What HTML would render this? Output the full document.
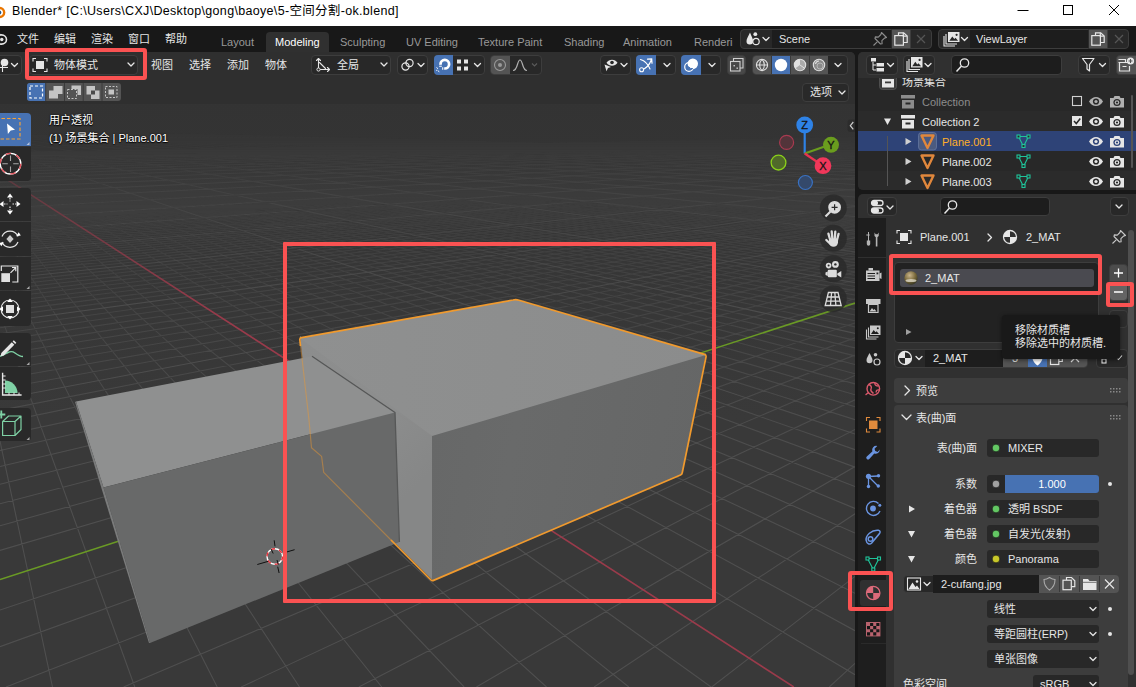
<!DOCTYPE html>
<html lang="zh-CN">
<head>
<meta charset="utf-8">
<title>Blender</title>
<style>
*{box-sizing:border-box;margin:0;padding:0}
html,body{width:1136px;height:687px;overflow:hidden;background:#181818}
body{position:relative;font-family:"Liberation Sans","Noto Sans CJK SC",sans-serif;font-size:11px;color:#e6e6e6;line-height:1}
.abs{position:absolute}
.t{position:absolute;white-space:nowrap;line-height:14px;height:14px}
.w{color:#fff}
.dim{color:#989898}
.fld{position:absolute;background:#282828;border:1px solid #3d3d3d;border-radius:4px}
.dark{background:#1d1d1d}
.btn{position:absolute;background:#545454;border:1px solid #3d3d3d}
.tb{left:-6px;width:37px;background:#292929}
.blue{background:#4772b3 !important}
svg{position:absolute;overflow:visible}
.chev{fill:none;stroke:#e6e6e6;stroke-width:1.3;stroke-linecap:round;stroke-linejoin:round}
</style>
</head>
<body>
<!-- ===== window title bar ===== -->
<div class="abs" style="left:0;top:0;width:1136px;height:26px;background:#fff"></div>
<svg style="left:-9px;top:5px" width="16" height="14" viewBox="0 0 16 14"><ellipse cx="8" cy="7.5" rx="5.2" ry="4.6" fill="#fff" stroke="#ea7600" stroke-width="2.4"/><circle cx="8.3" cy="7.5" r="2" fill="#265787"/></svg>
<div class="t" style="left:12px;top:3px;font-size:12.500px;color:#000;line-height:16px;height:16px;letter-spacing:0.320px">Blender* [C:\Users\CXJ\Desktop\gong\baoye\5-空间分割-ok.blend]</div>
<svg style="left:1017px;top:4px" width="110" height="14" viewBox="0 0 110 14"><g fill="none" stroke="#000" stroke-width="1"><path d="M0.5 6.5H11.5"/><rect x="46.5" y="1.5" width="9" height="9"/><path d="M92 1L102 11M102 1L92 11"/></g></svg>
<!-- ===== top bar ===== -->
<div class="abs" style="left:0;top:26px;width:1136px;height:26px;background:#181818"></div>
<svg style="left:-8px;top:31px" width="18" height="16" viewBox="0 0 18 16"><g fill="none" stroke="#e6e6e6" stroke-width="1.6" stroke-linecap="round"><ellipse cx="9.5" cy="8.5" rx="5" ry="4.6"/><path d="M3 8.5L8 3.5"/></g><circle cx="9.8" cy="8.5" r="1.7" fill="#e6e6e6"/></svg>
<div class="t" style="left:17px;top:32px">文件</div>
<div class="t" style="left:54px;top:32px">编辑</div>
<div class="t" style="left:91px;top:32px">渲染</div>
<div class="t" style="left:128px;top:32px">窗口</div>
<div class="t" style="left:165px;top:32px">帮助</div>
<div class="abs" style="left:266px;top:32px;width:63px;height:20px;background:#303030;border-radius:4px 4px 0 0"></div>
<div class="t dim" style="left:221px;top:35px">Layout</div>
<div class="t w" style="left:275px;top:35px">Modeling</div>
<div class="t dim" style="left:340px;top:35px">Sculpting</div>
<div class="t dim" style="left:406px;top:35px">UV Editing</div>
<div class="t dim" style="left:478px;top:35px">Texture Paint</div>
<div class="t dim" style="left:564px;top:35px">Shading</div>
<div class="t dim" style="left:623px;top:35px">Animation</div>
<div class="t dim" style="left:694px;top:35px;width:39px;overflow:hidden">Rendering</div>
<!-- scene selector -->
<div class="fld" style="left:740px;top:29px;width:192px;height:20px"></div>
<div class="abs dark" style="left:772px;top:30px;width:119px;height:18px"></div>
<div class="btn" style="left:891px;top:29px;width:20px;height:20px;border-left:1px solid #2b2b2b"></div>
<svg style="left:745px;top:31px" width="26" height="16" viewBox="0 0 26 16"><g fill="#e6e6e6"><path d="M5 1.5C3.5 5 1.5 7.5 1.5 10.2a3.3 3.3 0 0 0 6.6 0C8.1 7.5 6.3 5 5 1.5z"/><circle cx="10.3" cy="3.2" r="1.9"/></g><circle cx="11" cy="10.5" r="3.2" fill="#282828" stroke="#e6e6e6" stroke-width="1.2"/><path class="chev" d="M18 6.5l3 3l3-3"/></svg>
<div class="t" style="left:779px;top:32px">Scene</div>
<svg style="left:872px;top:31px" width="16" height="16" viewBox="0 0 16 16"><path d="M9.5 1.5l5 5l-2 .6l-2.6 2.6l.2 3l-1.6.3l-5.5-5.5l.3-1.6l3 .2l2.6-2.6zM5.2 10.8L1.5 14.5" fill="none" stroke="#8c8c8c" stroke-width="1.1" stroke-linejoin="round"/></svg>
<svg style="left:894px;top:32px" width="14" height="14" viewBox="0 0 14 14"><g fill="none" stroke="#e6e6e6" stroke-width="1.2"><path d="M4.5 3.5V0.8h5.2l3.5 3.3v6.4H9.5"/><path d="M9.3 0.8v3.4h3.6"/><rect x="0.8" y="3.6" width="8.6" height="9.6"/></g></svg>
<svg style="left:916px;top:34px" width="10" height="10" viewBox="0 0 10 10"><path d="M1 1l8 8M9 1l-8 8" stroke="#555" stroke-width="1.2" fill="none"/></svg>
<!-- view layer selector -->
<div class="fld" style="left:938px;top:29px;width:191px;height:20px"></div>
<div class="abs dark" style="left:970px;top:30px;width:118px;height:18px"></div>
<div class="btn" style="left:1088px;top:29px;width:20px;height:20px;border-left:1px solid #2b2b2b"></div>
<svg style="left:943px;top:31px" width="26" height="16" viewBox="0 0 26 16"><g fill="none" stroke="#e6e6e6" stroke-width="1.1"><path d="M1 5v10h11"/><path d="M3 3v10h11"/></g><rect x="5" y="1" width="11.5" height="10" fill="#e6e6e6"/><path d="M6.3 9.8l3-4.4l2 2.6l1.2-1.2l2.6 3z" fill="#282828"/><circle cx="13.6" cy="3.8" r="1.1" fill="#282828"/><path class="chev" d="M18.5 6.5l3 3l3-3"/></svg>
<div class="t" style="left:976px;top:32px">ViewLayer</div>
<svg style="left:1091px;top:32px" width="14" height="14" viewBox="0 0 14 14"><g fill="none" stroke="#e6e6e6" stroke-width="1.2"><path d="M4.5 3.5V0.8h5.2l3.5 3.3v6.4H9.5"/><path d="M9.3 0.8v3.4h3.6"/><rect x="0.8" y="3.6" width="8.6" height="9.6"/></g></svg>
<svg style="left:1114px;top:34px" width="10" height="10" viewBox="0 0 10 10"><path d="M1 1l8 8M9 1l-8 8" stroke="#555" stroke-width="1.2" fill="none"/></svg>
<!-- ===== 3d viewport scene ===== -->
<svg style="left:0;top:0" width="1136" height="687" viewBox="0 0 1136 687">
<defs>
<linearGradient id="fade" x1="0" y1="128" x2="0" y2="320" gradientUnits="userSpaceOnUse"><stop offset="0" stop-color="#fff" stop-opacity="0"/><stop offset="0.3" stop-color="#fff" stop-opacity="0.42"/><stop offset="1" stop-color="#fff" stop-opacity="1"/></linearGradient>
<linearGradient id="fade2" x1="0" y1="140" x2="0" y2="470" gradientUnits="userSpaceOnUse"><stop offset="0" stop-color="#fff" stop-opacity="0"/><stop offset="0.2" stop-color="#fff" stop-opacity="0.3"/><stop offset="0.5" stop-color="#fff" stop-opacity="0.55"/><stop offset="1" stop-color="#fff" stop-opacity="1"/></linearGradient>
<mask id="gm" maskUnits="userSpaceOnUse" x="0" y="52" width="855" height="635"><rect x="0" y="52" width="855" height="635" fill="url(#fade)"/></mask>
<mask id="gm2" maskUnits="userSpaceOnUse" x="0" y="52" width="855" height="635"><rect x="0" y="52" width="855" height="635" fill="url(#fade2)"/></mask>
<clipPath id="vp"><rect x="-20" y="52" width="875" height="660" rx="5"/></clipPath>
<linearGradient id="gx" x1="432" y1="433" x2="700" y2="480" gradientUnits="userSpaceOnUse"><stop offset="0" stop-color="#676868"/><stop offset="0.3" stop-color="#696a6a"/><stop offset="1" stop-color="#656666"/></linearGradient>
<linearGradient id="gt" x1="300" y1="338" x2="706" y2="355" gradientUnits="userSpaceOnUse"><stop offset="0" stop-color="#8f9090"/><stop offset="1" stop-color="#8b8c8c"/></linearGradient>
<linearGradient id="gy" x1="300" y1="338" x2="432" y2="470" gradientUnits="userSpaceOnUse"><stop offset="0" stop-color="#8c8d8d"/><stop offset="0.55" stop-color="#8d8e8e"/><stop offset="1" stop-color="#868787"/></linearGradient>
<linearGradient id="bgg" x1="0" y1="100" x2="0" y2="420" gradientUnits="userSpaceOnUse"><stop offset="0" stop-color="#333333"/><stop offset="1" stop-color="#393939"/></linearGradient>
</defs>
<g clip-path="url(#vp)">
<rect x="0" y="52" width="855" height="635" fill="url(#bgg)"/>
<g mask="url(#gm2)" fill="none">
<path stroke="#4f4f4f" stroke-width="1.1" d="M0.0 152.7L855.0 137.8M0.0 152.8L855.0 137.9M0.0 152.9L855.0 137.9M0.0 152.9L855.0 138.0M0.0 153.0L855.0 138.0M0.0 153.1L855.0 138.0M0.0 153.2L855.0 138.1M0.0 153.3L855.0 138.1M0.0 153.4L855.0 138.1M0.0 153.6L855.0 138.2M0.0 153.7L855.0 138.3M0.0 153.8L855.0 138.3M0.0 153.9L855.0 138.3M0.0 154.0L855.0 138.4M0.0 154.1L855.0 138.4M0.0 154.2L855.0 138.5M0.0 154.3L855.0 138.5M0.0 154.4L855.0 138.6M0.0 154.6L855.0 138.6M0.0 154.7L855.0 138.7M0.0 154.8L855.0 138.7M0.0 155.0L855.0 138.8M0.0 155.1L855.0 138.8M0.0 155.2L855.0 138.9M0.0 155.3L855.0 138.9M0.0 155.4L855.0 138.9M0.0 155.5L855.0 139.0M0.0 155.7L855.0 139.1M0.0 155.8L855.0 139.1M0.0 156.0L855.0 139.2M0.0 156.1L855.0 139.2M0.0 156.2L855.0 139.3M0.0 156.3L855.0 139.3M0.0 156.4L855.0 139.4M0.0 156.6L855.0 139.4M0.0 156.7L855.0 139.5M0.0 156.9L855.0 139.6M0.0 157.1L855.0 139.6M0.0 157.2L855.0 139.7M0.0 157.3L855.0 139.7M0.0 157.4L855.0 139.8M0.0 157.6L855.0 139.8M0.0 157.7L855.0 139.9M0.0 157.8L855.0 139.9M0.0 158.0L855.0 140.0M0.0 158.2L855.0 140.1M0.0 158.4L855.0 140.1M0.0 158.5L855.0 140.2M0.0 158.6L855.0 140.3M0.0 158.8L855.0 140.3M0.0 158.9L855.0 140.4M0.0 159.1L855.0 140.4M0.0 159.2L855.0 140.5M0.0 159.4L855.0 140.5M0.0 159.6L855.0 140.7M0.0 159.8L855.0 140.7M0.0 160.0L855.0 140.8M0.0 160.1L855.0 140.9M0.0 160.3L855.0 140.9M0.0 160.4L855.0 141.0M0.0 160.6L855.0 141.0M0.0 160.7L855.0 141.1M0.0 160.9L855.0 141.2M0.0 161.2L855.0 141.3M0.0 161.4L855.0 141.4M0.0 161.5L855.0 141.4M0.0 161.7L855.0 141.5M0.0 161.9L855.0 141.6M0.0 162.1L855.0 141.6M0.0 162.2L855.0 141.7M0.0 162.4L855.0 141.8M0.0 162.6L855.0 141.9M0.0 162.9L855.0 142.0M0.0 163.1L855.0 142.1M0.0 163.3L855.0 142.1M0.0 163.5L855.0 142.2M0.0 163.7L855.0 142.3M0.0 163.9L855.0 142.4M0.0 164.1L855.0 142.5M0.0 164.3L855.0 142.5M0.0 164.4L855.0 142.6M0.0 164.8L855.0 142.8M0.0 165.0L855.0 142.9M0.0 165.3L855.0 142.9M0.0 165.5L855.0 143.0M0.0 165.7L855.0 143.1M0.0 165.9L855.0 143.2M0.0 166.1L855.0 143.3M0.0 166.3L855.0 143.4M0.0 166.5L855.0 143.5M0.0 167.0L855.0 143.6M0.0 167.2L855.0 143.7M0.0 167.4L855.0 143.8M0.0 167.7L855.0 143.9M0.0 167.9L855.0 144.0M0.0 168.1L855.0 144.1M0.0 168.4L855.0 144.2M0.0 168.6L855.0 144.3M0.0 168.9L855.0 144.4M0.0 169.4L855.0 144.6M0.0 169.6L855.0 144.7M0.0 169.9L855.0 144.8M0.0 170.1L855.0 144.9M0.0 170.4L855.0 145.0M0.0 170.7L855.0 145.1M0.0 170.9L855.0 145.2M0.0 171.2L855.0 145.4M0.0 171.5L855.0 145.5M0.0 172.1L855.0 145.7M0.0 172.4L855.0 145.8M0.0 172.6L855.0 145.9M0.0 172.9L855.0 146.0M0.0 173.2L855.0 146.2M0.0 173.5L855.0 146.3M0.0 173.9L855.0 146.4M0.0 174.2L855.0 146.5M0.0 174.5L855.0 146.7M0.0 175.1L855.0 146.9M0.0 175.5L855.0 147.1M0.0 175.8L855.0 147.2M0.0 176.1L855.0 147.3M0.0 176.5L855.0 147.5M0.0 176.8L855.0 147.6M0.0 177.2L855.0 147.8M0.0 177.6L855.0 147.9M0.0 177.9L855.0 148.1M0.0 178.7L855.0 148.4M0.0 179.0L855.0 148.5M0.0 179.4L855.0 148.7M0.0 179.8L855.0 148.8M0.0 180.2L855.0 149.0M0.0 180.6L855.0 149.2M0.0 181.1L855.0 149.3M0.0 181.5L855.0 149.5M0.0 181.9L855.0 149.7M0.0 182.8L855.0 150.0M0.0 183.2L855.0 150.2M0.0 183.7L855.0 150.4M0.0 184.1L855.0 150.6M0.0 184.6L855.0 150.8M0.0 185.1L855.0 151.0M0.0 185.6L855.0 151.2M0.0 186.1L855.0 151.4M0.0 186.6L855.0 151.6M0.0 187.6L855.0 152.0M0.0 188.1L855.0 152.2M0.0 188.7L855.0 152.4M0.0 189.2L855.0 152.6M0.0 189.8L855.0 152.9M0.0 190.3L855.0 153.1M0.0 190.9L855.0 153.3M0.0 191.5L855.0 153.6M0.0 192.1L855.0 153.8M0.0 193.3L855.0 154.3M0.0 194.0L855.0 154.6M0.0 194.6L855.0 154.8M0.0 195.3L855.0 155.1M0.0 195.9L855.0 155.4M0.0 196.6L855.0 155.6M0.0 197.3L855.0 155.9M0.0 198.1L855.0 156.2M0.0 198.8L855.0 156.5M0.0 200.3L855.0 157.1M0.0 201.1L855.0 157.4M0.0 201.9L855.0 157.8M0.0 202.7L855.0 158.1M0.0 203.5L855.0 158.4M0.0 204.4L855.0 158.8M0.0 205.2L855.0 159.1M0.0 206.1L855.0 159.5M0.0 207.0L855.0 159.8M0.0 208.9L855.0 160.6M0.0 209.9L855.0 161.0M0.0 210.9L855.0 161.4M0.0 211.9L855.0 161.8M0.0 213.0L855.0 162.3M0.0 214.0L855.0 162.7M0.0 215.1L855.0 163.1M0.0 216.3L855.0 163.6M0.0 217.4L855.0 164.1M0.0 219.9L855.0 165.0M0.0 221.1L855.0 165.6M0.0 222.4L855.0 166.1M0.0 223.7L855.0 166.6M0.0 225.1L855.0 167.2M0.0 226.5L855.0 167.7M0.0 228.0L855.0 168.3M0.0 229.5L855.0 168.9M0.0 231.0L855.0 169.5M0.0 234.2L855.0 170.9M0.0 235.9L855.0 171.5M0.0 237.6L855.0 172.2M0.0 239.4L855.0 173.0M0.0 241.3L855.0 173.7M0.0 243.2L855.0 174.5M0.0 245.2L855.0 175.3M0.0 247.2L855.0 176.1M0.0 249.4L855.0 177.0M0.0 253.9L855.0 178.8M0.0 256.2L855.0 179.8M0.0 258.7L855.0 180.8M0.0 261.3L855.0 181.8M0.0 263.9L855.0 182.9M0.0 266.7L855.0 184.0M0.0 269.6L855.0 185.2M0.0 272.6L855.0 186.4M0.0 275.7L855.0 187.7M0.0 282.4L855.0 190.4M0.0 286.0L855.0 191.8M0.0 289.8L855.0 193.3M0.0 293.7L855.0 194.9M0.0 297.8L855.0 196.6M0.0 302.2L855.0 198.4M0.0 306.7L855.0 200.2M0.0 311.6L855.0 202.2M0.0 316.6L855.0 204.2M0.0 327.7L855.0 208.7M0.0 333.7L855.0 211.1M0.0 340.1L855.0 213.7M0.0 346.9L855.0 216.5M0.0 354.2L855.0 219.4M0.0 362.0L855.0 222.6M0.0 370.3L855.0 225.9M0.0 379.2L855.0 229.6M0.0 388.8L855.0 233.4M0.0 410.4L855.0 242.2M0.0 441.1L52.5 687.0M0.0 422.6L855.0 247.1M0.0 313.2L134.8 687.0M0.0 435.9L855.0 252.5M0.0 259.5L217.2 687.0M0.0 450.5L855.0 258.4M0.0 229.9L299.5 687.0M0.0 466.5L855.0 264.9M0.0 211.1L381.8 687.0M0.0 484.2L855.0 272.1M0.0 198.2L464.1 687.0M0.0 503.8L855.0 280.0M0.0 188.8L546.5 687.0M0.0 525.7L855.0 288.9M0.0 181.5L628.8 687.0M0.0 550.4L855.0 298.8M0.0 175.8L711.1 687.0M0.0 610.0L855.0 323.0M0.0 167.4L855.0 674.7M0.0 646.7L855.0 337.8M0.0 164.3L855.0 630.7M6.0 687.0L855.0 355.1M0.0 161.5L855.0 593.3M123.6 687.0L855.0 375.5M0.0 159.2L855.0 561.1M241.2 687.0L855.0 399.8M0.0 157.2L855.0 533.1M358.8 687.0L855.0 429.5M0.0 155.4L855.0 508.4M476.4 687.0L855.0 466.5M0.0 153.8L855.0 486.6M594.1 687.0L855.0 513.8M0.0 152.4L855.0 467.2M711.7 687.0L855.0 576.4M0.0 151.1L855.0 449.7M0.0 148.9L855.0 419.7M0.0 148.0L855.0 406.7M0.0 147.1L855.0 394.8M0.0 146.3L855.0 383.9M0.0 145.6L855.0 373.8M0.0 144.9L855.0 364.5M0.0 144.3L855.0 355.9M0.0 143.7L855.0 347.9M0.0 143.2L855.0 340.4M-0.0 142.2L855.0 326.9M0.0 141.8L855.0 320.7M0.0 141.3L855.0 315.0M0.0 140.9L855.0 309.5M0.0 140.6L855.0 304.4M0.0 140.2L855.0 299.6M0.0 139.9L855.0 295.0M0.0 139.6L855.0 290.6M0.0 139.3L855.0 286.5M0.0 138.7L855.0 278.8M0.0 138.5L855.0 275.3M0.0 138.2L855.0 271.9M0.0 138.0L855.0 268.6M0.0 137.8L855.0 265.5M0.0 137.5L855.0 262.6M0.0 137.3L855.0 259.7M0.0 137.1L855.0 257.0M0.0 136.9L855.0 254.4M0.0 136.6L855.0 249.5M0.0 136.4L855.0 247.1M0.0 136.3L855.0 244.9M0.0 136.1L855.0 242.8M0.0 136.0L855.0 240.7M0.0 135.8L855.0 238.7M0.0 135.7L855.0 236.8M0.0 135.5L855.0 234.9M0.0 135.4L855.0 233.1M0.6 135.2L855.0 229.7M1.6 135.2L855.0 228.0M2.7 135.2L855.0 226.5M3.7 135.2L855.0 224.9M4.8 135.2L855.0 223.4M5.8 135.2L855.0 222.0M6.9 135.2L855.0 220.6M7.9 135.2L855.0 219.2M8.9 135.2L855.0 217.9M11.0 135.2L855.0 215.4M12.0 135.2L855.0 214.2M13.1 135.2L855.0 213.0M14.1 135.1L855.0 211.9M15.1 135.1L855.0 210.8M16.1 135.1L855.0 209.7M17.2 135.1L855.0 208.6M18.2 135.1L855.0 207.6M19.2 135.1L855.0 206.6M21.3 135.1L855.0 204.6M22.3 135.1L855.0 203.7M23.3 135.1L855.0 202.8M24.3 135.1L855.0 201.9M25.3 135.1L855.0 201.0M26.3 135.1L855.0 200.2M27.4 135.1L855.0 199.4M28.4 135.1L855.0 198.6M29.4 135.1L855.0 197.8M31.4 135.1L855.0 196.2M32.4 135.1L855.0 195.5M33.4 135.0L855.0 194.8M34.4 135.0L855.0 194.1M35.4 135.0L855.0 193.4M36.4 135.0L855.0 192.7M37.4 135.0L855.0 192.0M38.4 135.0L855.0 191.4M39.4 135.0L855.0 190.7M41.4 135.0L855.0 189.5M42.3 135.0L855.0 188.9M43.3 135.0L855.0 188.3M44.3 135.0L855.0 187.7M45.3 135.0L855.0 187.1M46.3 135.0L855.0 186.6M47.3 135.0L855.0 186.0M48.3 135.0L855.0 185.5M49.2 135.0L855.0 185.0M51.2 135.0L855.0 183.9M52.2 134.9L855.0 183.4M53.1 134.9L855.0 183.0M54.1 134.9L855.0 182.5M55.1 134.9L855.0 182.0M56.1 134.9L855.0 181.5M57.0 134.9L855.0 181.1M58.0 134.9L855.0 180.6M59.0 134.9L855.0 180.2M60.9 134.9L855.0 179.3M61.8 134.9L855.0 178.9M62.8 134.9L855.0 178.5M63.8 134.9L855.0 178.1M64.7 134.9L855.0 177.7M65.7 134.9L855.0 177.3M66.6 134.9L855.0 176.9M67.6 134.9L855.0 176.5M68.5 134.9L855.0 176.1M70.4 134.9L855.0 175.4M71.4 134.8L855.0 175.0M72.3 134.8L855.0 174.7M73.3 134.8L855.0 174.3M74.2 134.8L855.0 174.0M75.2 134.8L855.0 173.6M76.1 134.8L855.0 173.3M77.1 134.8L855.0 173.0M78.0 134.8L855.0 172.7M79.9 134.8L855.0 172.0M80.8 134.8L855.0 171.7M81.7 134.8L855.0 171.4M82.7 134.8L855.0 171.1M83.6 134.8L855.0 170.8M84.5 134.8L855.0 170.5M85.5 134.8L855.0 170.2M86.4 134.8L855.0 169.9M87.3 134.8L855.0 169.7M89.2 134.8L855.0 169.1M90.1 134.8L855.0 168.8M91.0 134.7L855.0 168.6M91.9 134.7L855.0 168.3M92.9 134.7L855.0 168.0M93.8 134.7L855.0 167.8M94.7 134.7L855.0 167.5M95.6 134.7L855.0 167.3M96.5 134.7L855.0 167.0M98.3 134.7L855.0 166.5M99.3 134.7L855.0 166.3M100.2 134.7L855.0 166.1M101.1 134.7L855.0 165.8M102.0 134.7L855.0 165.6M102.9 134.7L855.0 165.4M103.8 134.7L855.0 165.2M104.7 134.7L855.0 164.9M105.6 134.7L855.0 164.7M107.4 134.7L855.0 164.3M108.3 134.7L855.0 164.1M109.2 134.7L855.0 163.9M110.1 134.6L855.0 163.7M111.0 134.6L855.0 163.4M111.9 134.6L855.0 163.2M112.8 134.6L855.0 163.0M113.7 134.6L855.0 162.8M114.5 134.6L855.0 162.7M116.3 134.6L855.0 162.3M117.2 134.6L855.0 162.1M118.1 134.6L855.0 161.9M119.0 134.6L855.0 161.7M119.9 134.6L855.0 161.5M120.7 134.6L855.0 161.3M121.6 134.6L855.0 161.2M122.5 134.6L855.0 161.0M123.4 134.6L855.0 160.8M125.1 134.6L855.0 160.5M126.0 134.6L855.0 160.3M126.9 134.6L855.0 160.1M127.7 134.6L855.0 160.0M128.6 134.6L855.0 159.8M129.5 134.5L855.0 159.6M130.4 134.5L855.0 159.5M131.2 134.5L855.0 159.3M132.1 134.5L855.0 159.2M133.8 134.5L855.0 158.8M134.7 134.5L855.0 158.7M135.5 134.5L855.0 158.5M136.4 134.5L855.0 158.4M137.3 134.5L855.0 158.2M138.1 134.5L855.0 158.1M139.0 134.5L855.0 157.9M139.8 134.5L855.0 157.8M140.7 134.5L855.0 157.7M142.4 134.5L855.0 157.4M143.3 134.5L855.0 157.2M144.1 134.5L855.0 157.1M145.0 134.5L855.0 157.0M145.8 134.5L855.0 156.8M146.6 134.5L855.0 156.7M147.5 134.5L855.0 156.6M148.3 134.4L855.0 156.4M149.2 134.4L855.0 156.3M150.9 134.4L855.0 156.0M151.7 134.4L855.0 155.9M152.5 134.4L855.0 155.8M153.4 134.4L855.0 155.7M154.2 134.4L855.0 155.5M155.1 134.4L855.0 155.4M155.9 134.4L855.0 155.3M156.7 134.4L855.0 155.2M157.6 134.4L855.0 155.0M159.2 134.4L855.0 154.8M160.0 134.4L855.0 154.7M160.9 134.4L855.0 154.6M161.7 134.4L855.0 154.5M162.5 134.4L855.0 154.4M163.4 134.4L855.0 154.2M164.2 134.4L855.0 154.1M165.0 134.4L855.0 154.0M165.8 134.4L855.0 153.9M167.5 134.3L855.0 153.7M168.3 134.3L855.0 153.6M169.1 134.3L855.0 153.5M169.9 134.3L855.0 153.4M170.7 134.3L855.0 153.3M171.5 134.3L855.0 153.2M172.4 134.3L855.0 153.1M173.2 134.3L855.0 153.0M174.0 134.3L855.0 152.9M175.6 134.3L855.0 152.7M176.4 134.3L855.0 152.6M177.2 134.3L855.0 152.5M178.0 134.3L855.0 152.4M178.8 134.3L855.0 152.3M179.6 134.3L855.0 152.2M180.4 134.3L855.0 152.1M181.2 134.3L855.0 152.0M182.0 134.3L855.0 151.9M183.6 134.3L855.0 151.7M184.4 134.3L855.0 151.6M185.2 134.3L855.0 151.5M186.0 134.3L855.0 151.4M186.8 134.2L855.0 151.3M187.6 134.2L855.0 151.3M188.4 134.2L855.0 151.2M189.2 134.2L855.0 151.1M190.0 134.2L855.0 151.0"/>
</g>
<g mask="url(#gm)" fill="none">
<path stroke="#4e4e4e" stroke-width="1.1" d="M0.0 152.6L855.0 137.8M0.0 153.5L855.0 138.2M0.0 154.5L855.0 138.6M0.0 155.6L855.0 139.0M0.0 156.8L855.0 139.5M0.0 158.1L855.0 140.0M0.0 159.5L855.0 140.6M0.0 161.0L855.0 141.2M0.0 162.8L855.0 141.9M0.0 164.6L855.0 142.7M0.0 166.8L855.0 143.5M0.0 169.1L855.0 144.5M0.0 171.8L855.0 145.6M0.0 174.8L855.0 146.8M0.0 178.3L855.0 148.2M0.0 182.3L855.0 149.8M0.0 187.1L855.0 151.8M0.0 192.7L855.0 154.1M0.0 199.5L855.0 156.8M0.0 208.0L855.0 160.2M0.0 218.6L855.0 164.5M0.0 232.6L855.0 170.2M0.0 251.6L855.0 177.9M0.0 279.0L855.0 189.0M0.0 322.0L855.0 206.4M0.0 399.2L855.0 237.6M829.3 687.0L855.0 663.3M0.0 150.0L855.0 434.0M0.0 142.7L855.0 333.4M0.0 139.0L855.0 282.6M0.0 136.8L855.0 251.9M0.0 135.3L855.0 231.3M10.0 135.2L855.0 216.6M20.2 135.1L855.0 205.6M30.4 135.1L855.0 197.0M40.4 135.0L855.0 190.1M50.2 135.0L855.0 184.5M59.9 134.9L855.0 179.7M69.5 134.9L855.0 175.8M78.9 134.8L855.0 172.3M88.2 134.8L855.0 169.4M97.4 134.7L855.0 166.8M106.5 134.7L855.0 164.5M115.4 134.6L855.0 162.5M124.3 134.6L855.0 160.6M133.0 134.5L855.0 159.0M141.5 134.5L855.0 157.5M150.0 134.4L855.0 156.2M158.4 134.4L855.0 154.9M166.6 134.4L855.0 153.8M174.8 134.3L855.0 152.8M182.8 134.3L855.0 151.8M190.8 134.2L855.0 150.9"/>
<path stroke="#9a3b4b" stroke-width="1.6" d="M0 174.900L793.800 687"/>
<path stroke="#6a9a25" stroke-width="1.6" d="M0 579.500L855 303.100"/>
</g>
<!-- boxes -->
<g stroke-linejoin="round">
<!-- B1 (selected) -->
<polygon points="300,336 433,434 433.500,581 314,463" fill="url(#gy)"/>
<polygon points="432,434 706,353 682,474.400 432,581" fill="url(#gx)"/>
<polygon points="300,338 516,299.500 706,355 432,436" fill="url(#gt)"/>
<path d="M397,413.500L432,436" stroke="#8a8b8b" stroke-width="1" fill="none" opacity=".6"/>
<!-- B2 -->
<polygon points="76,401.5 312,356.3 395,412.5 103.5,487.5" fill="#8f9090"/>
<polygon points="103.5,487.5 395,412.5 399.4,542 150,643" fill="#686969"/>
<polygon points="76,401.5 103.5,487.5 150,643 149,643 75,402" fill="#7a7b7b"/>
<path d="M312,356.300L395,412.500L399.400,542" fill="none" stroke="#565757" stroke-width="1.300"/>
<!-- outline of active object -->
<path d="M392,541L323.7,472.4L321.6,456.4L311.5,447.7L309,420L300.5,345" fill="none" stroke="#f09a2e" stroke-width="1.2" stroke-opacity="0.45"/>
<path d="M300.5,346L299.8,339.5Q299.8,338 301.5,337.7L513,300Q516,299.3 519,300.2L704.5,354.4Q706.4,355 706,357L682.3,472.5Q682,474.4 680.5,475L433,580.6Q432,581 431,580L391,540" fill="none" stroke="#f09a2e" stroke-width="1.700"/>
</g>
<!-- 3d cursor -->
<g fill="none">
<circle cx="274.800" cy="556.500" r="7.800" stroke="#fff" stroke-width="1.400"/>
<circle cx="274.800" cy="556.500" r="7.800" stroke="#e8323c" stroke-width="1.400" stroke-dasharray="4.080 4.080"/>
<path d="M274.200,540.300l.8,6M277.700,566.700l1.400,6.300M257.300,564.500l11,-3.200M283.200,553l11.400,-3.300M271,549l2.200,4.500M277,560l1.300,4.500" stroke="#111" stroke-width="1"/>
</g>
</g>
</svg>
<!-- ===== viewport header (two rows, translucent) ===== -->
<div class="abs" style="left:0;top:52px;width:855px;height:52px;background:rgba(46,46,46,.8);border-radius:0 5px 0 0"></div>
<!-- editor type -->
<div class="fld" style="left:-6px;top:55px;width:28px;height:20px"></div>
<svg style="left:-2px;top:57px" width="24" height="16" viewBox="0 0 24 16"><circle cx="6.5" cy="5.5" r="3.8" fill="#e6e6e6"/><path d="M0 10.5H10M4.5 6V15" stroke="#e6e6e6" stroke-width="1.1" fill="none"/><path class="chev" d="M13.5 6.5l3 3l3-3"/></svg>
<!-- mode -->
<div class="fld" style="left:29px;top:55px;width:109px;height:20px"></div>
<svg style="left:32px;top:57px" width="16" height="16" viewBox="0 0 16 16"><rect x="4" y="4" width="8" height="8" fill="#e6e6e6"/><path d="M1 4.5V1.5H4M12 1.5h3V4.5M15 11.5v3H12M4 14.500H1V11.500" fill="none" stroke="#e6e6e6" stroke-width="1.1"/></svg>
<div class="t" style="left:54px;top:58px">物体模式</div>
<svg style="left:127px;top:62px" width="8" height="6" viewBox="0 0 8 6"><path class="chev" d="M1 1l3 3l3-3"/></svg>
<div class="t" style="left:151px;top:58px">视图</div>
<div class="t" style="left:189px;top:58px">选择</div>
<div class="t" style="left:227px;top:58px">添加</div>
<div class="t" style="left:265px;top:58px">物体</div>
<!-- orientation -->
<div class="fld" style="left:311px;top:55px;width:80px;height:20px"></div>
<svg style="left:315px;top:57px" width="16" height="16" viewBox="0 0 16 16"><g fill="none" stroke="#e6e6e6" stroke-width="1.1" stroke-linecap="round" stroke-linejoin="round"><path d="M3.5 12.5V1.5M1.5 3.5l2-2l2 2M3.500 12.500H14.500M12.500 10.500l2 2l-2 2"/><path d="M4.5 5.500L10.500 11.500"/></g><circle cx="3.5" cy="12.5" r="1.6" fill="#282828" stroke="#e6e6e6"/></svg>
<div class="t" style="left:337px;top:58px">全局</div>
<svg style="left:380px;top:62px" width="8" height="6" viewBox="0 0 8 6"><path class="chev" d="M1 1l3 3l3-3"/></svg>
<!-- pivot/link -->
<div class="fld" style="left:397px;top:55px;width:31px;height:20px"></div>
<svg style="left:400px;top:57px" width="28" height="16" viewBox="0 0 28 16"><g fill="none" stroke="#e6e6e6" stroke-width="1.2"><circle cx="5.500" cy="9.500" r="3.600"/><circle cx="9.500" cy="6" r="3.600"/><path class="chev" d="M18 6.500l3 3l3-3"/></g></svg>
<!-- snap -->
<div class="fld" style="left:434px;top:55px;width:51px;height:20px"></div>
<div class="abs blue" style="left:434px;top:55px;width:19px;height:20px;border-radius:4px 0 0 4px"></div>
<svg style="left:435px;top:57px" width="50" height="16" viewBox="0 0 50 16"><path d="M5.500 9.800V7.200a4.300 4.300 0 1 1 4.300 4.300H7.200" fill="none" stroke="#fff" stroke-width="2.700"/><path d="M3.800 8.300h3.400M8.700 9.800v3.400" stroke="#4772b3" stroke-width=".9" fill="none"/><path d="M1.500 10.500l1.500 1.200M3 13.800l1.300 1M1.200 13.300h1.200" stroke="#fff" stroke-width="1" fill="none"/><g fill="#e6e6e6"><rect x="22" y="2.500" width="4" height="4"/><rect x="29" y="2.500" width="4" height="4"/><rect x="22" y="9.500" width="4" height="4"/><rect x="29" y="9.500" width="4" height="4"/></g><path class="chev" d="M39.500 6.500l3 3l3-3"/></svg>
<!-- proportional -->
<div class="fld" style="left:490px;top:55px;width:52px;height:20px"></div>
<div class="abs" style="left:491px;top:56px;width:19px;height:18px;border-radius:3px 0 0 3px;background:#545454"></div>
<svg style="left:492px;top:57px" width="50" height="16" viewBox="0 0 50 16"><circle cx="8" cy="8" r="5.500" fill="none" stroke="#9a9a9a" stroke-width="1.100"/><circle cx="8" cy="8" r="2" fill="#9a9a9a"/><path d="M21 13.500c5 0 4-10.500 7-10.500s2 10.500 7 10.500" fill="none" stroke="#b0b0b0" stroke-width="1.200"/><path d="M40 6.500l2.500 2.500l2.500-2.500" fill="none" stroke="#5a5a5a" stroke-width="1.200"/></svg>
<!-- visibility -->
<div class="fld" style="left:600px;top:55px;width:31px;height:20px"></div>
<svg style="left:602px;top:57px" width="28" height="16" viewBox="0 0 28 16"><path d="M4.500 5.800c2.500-4 8.500-4 11 0c-2.500 4-8.500 4-11 0z" fill="#e6e6e6"/><circle cx="10" cy="5.500" r="1.800" fill="#282828"/><path d="M2.500 7.500l6.500 2.500l-3 1l-1.500 3.200z" fill="#e6e6e6"/><path class="chev" d="M19 6.500l3 3l3-3"/></svg>
<!-- gizmo -->
<div class="fld" style="left:636px;top:55px;width:40px;height:20px"></div>
<div class="abs blue" style="left:636px;top:55px;width:20px;height:20px;border-radius:4px 0 0 4px"></div>
<svg style="left:638px;top:57px" width="38" height="16" viewBox="0 0 38 16"><g fill="none" stroke="#fff" stroke-width="1.200" stroke-linecap="round"><path d="M3.500 13c4.500-1.500 8-5 10-10.500M9.500 2.200l4.200-.2l.3 4.200"/><path d="M2.500 2.500c3.500 1 7.500 4.500 9.500 9.500"/></g><circle cx="3.600" cy="12.800" r="2" fill="#4772b3" stroke="#fff" stroke-width="1.100"/><path class="chev" d="M26 6.500l3 3l3-3"/></svg>
<!-- overlays -->
<div class="fld" style="left:681px;top:55px;width:40px;height:20px"></div>
<div class="abs blue" style="left:681px;top:55px;width:20px;height:20px;border-radius:4px 0 0 4px"></div>
<svg style="left:683px;top:57px" width="38" height="16" viewBox="0 0 38 16"><circle cx="6" cy="10" r="4.300" fill="none" stroke="#fff" stroke-width="1.200"/><circle cx="9.800" cy="6.800" r="5.200" fill="#fff"/><path d="M5.500 9.500a4.500 4.500 0 0 0 4.500 2.200" fill="none" stroke="#4772b3" stroke-width="1"/><path class="chev" d="M26 6.500l3 3l3-3"/></svg>
<!-- xray -->
<div class="fld" style="left:727px;top:55px;width:19px;height:20px;background:#484848"></div>
<svg style="left:729px;top:57px" width="16" height="16" viewBox="0 0 16 16"><g fill="none" stroke="#d0d0d0" stroke-width="1.100"><rect x="1.500" y="4.500" width="9.500" height="9.500"/><path d="M4.500 4.500V1.500H14V11H11"/></g><rect x="4.500" y="8" width="1.400" height="1.400" fill="#d0d0d0"/><rect x="7.500" y="10.500" width="1.400" height="1.400" fill="#d0d0d0"/></svg>
<!-- shading -->
<div class="fld" style="left:752px;top:55px;width:96px;height:20px"></div>
<div class="abs" style="left:753px;top:56px;width:75px;height:18px;background:#545454;border-radius:3px 0 0 3px"></div>
<div class="abs blue" style="left:771px;top:56px;width:19px;height:18px"></div>
<div class="abs" style="left:771px;top:56px;width:1px;height:18px;background:#3a3a3a"></div>
<div class="abs" style="left:790px;top:56px;width:1px;height:18px;background:#3a3a3a"></div>
<div class="abs" style="left:809px;top:56px;width:1px;height:18px;background:#3a3a3a"></div>
<svg style="left:753px;top:57px" width="96" height="16" viewBox="0 0 96 16"><g fill="none" stroke="#e0e0e0" stroke-width="1.100"><circle cx="9" cy="8" r="5.600"/><path d="M3.400 8H14.600M9 2.400c-3.200 3-3.200 8.200 0 11.200M9 2.400c3.200 3 3.200 8.200 0 11.200"/></g><circle cx="28" cy="8" r="6.200" fill="#fff"/><circle cx="47" cy="8" r="5.700" fill="#aaa" stroke="#e0e0e0" stroke-width="1.100"/><path d="M47 2.300a5.700 5.700 0 0 0 -4.600 9l4.600-3.300z" fill="#e0e0e0"/><path d="M47 8l4.600 3.300" stroke="#e0e0e0"/><circle cx="66" cy="8" r="5.700" fill="#8a8a8a" stroke="#e0e0e0" stroke-width="1.100"/><path d="M62.500 7a3.600 3.600 0 0 1 3.500-3" stroke="#e0e0e0" stroke-width="1.100" fill="none"/><circle cx="67" cy="9" r="3" fill="none" stroke="#c0c0c0" stroke-width=".8"/><path class="chev" d="M82 6.500l3 3l3-3"/></svg>
<!-- second row: select mode icons -->
<div class="abs" style="left:27px;top:83px;width:94px;height:18px;background:#545454;border-radius:3px"></div>
<div class="abs blue" style="left:27px;top:83px;width:19px;height:18px;border-radius:3px 0 0 3px"></div>
<svg style="left:27px;top:83px" width="94" height="18" viewBox="0 0 94 18"><g stroke="#3a3a3a" stroke-width="1"><path d="M18.700 0V18M37.500 0V18M56.200 0V18M75 0V18"/></g><rect x="3" y="3" width="12.500" height="12" fill="none" stroke="#fff" stroke-width="1.200" stroke-dasharray="3 2"/><path d="M22 7.500h4.500V3h9v8h-4.500v4.500h-9z" fill="#c4c4c4"/><path d="M44.500 2.500h9.500v9.500h-3.500v-6h-6z" fill="#c4c4c4"/><rect x="40.500" y="6.500" width="9" height="9" fill="none" stroke="#c4c4c4" stroke-width="1" stroke-dasharray="2 1.500"/><path d="M59.500 3h8.500v4.500h4.500v8.500h-8.500v-4.500h-4.500z" fill="#c4c4c4"/><rect x="64" y="7.500" width="4" height="4" fill="#4a4a4a"/><rect x="78.500" y="3.500" width="11.500" height="11" fill="none" stroke="#c4c4c4" stroke-dasharray="2 1.500"/><rect x="81.500" y="6.500" width="5.500" height="5" fill="#c4c4c4"/></svg>
<!-- options -->
<div class="fld" style="left:802px;top:83px;width:47px;height:19px;background:rgba(40,40,40,.85)"></div>
<div class="t" style="left:810px;top:85px">选项</div>
<svg style="left:838px;top:90px" width="8" height="6" viewBox="0 0 8 6"><path class="chev" d="M1 1l3 3l3-3"/></svg>
<!-- ===== toolbar ===== -->
<div class="abs blue" style="left:-6px;top:113px;width:37px;height:33px;border-radius:4px 4px 0 0"></div>
<div class="abs tb" style="top:147px;height:34px;border-radius:0 0 4px 4px"></div>
<div class="abs tb" style="top:188px;height:33px;border-radius:4px 4px 0 0"></div>
<div class="abs tb" style="top:222px;height:34px"></div>
<div class="abs tb" style="top:257px;height:33px"></div>
<div class="abs tb" style="top:291px;height:35px;border-radius:0 0 4px 4px"></div>
<div class="abs tb" style="top:333px;height:33px;border-radius:4px 4px 0 0"></div>
<div class="abs tb" style="top:367px;height:33px;border-radius:0 0 4px 4px"></div>
<div class="abs tb" style="top:408px;height:33px;border-radius:4px"></div>
<svg style="left:0;top:112px" width="32" height="330" viewBox="0 112 32 330">
<!-- select box -->
<rect x="-4" y="118.500" width="24" height="20.500" fill="none" stroke="#f5a33a" stroke-width="1.200" stroke-dasharray="3.500 2"/>
<path d="M7 123.500l8 6.200l-4.300.7l-2.800 3.500z" fill="#fff"/>
<path d="M26.500 145h3v-3z" fill="#b8c4dc"/>
<!-- cursor -->
<circle cx="10.500" cy="163.700" r="10.300" fill="none" stroke="#fff" stroke-width="1.300"/>
<circle cx="10.500" cy="163.700" r="10.300" fill="none" stroke="#e0505a" stroke-width="1.300" stroke-dasharray="5.400 5.400"/>
<path d="M10.500 155.500v5.500M10.500 166.500v5.500M2.300 163.700h5.500M13.200 163.700h5.500" stroke="#a8a8a8" stroke-width="1.100"/>
<!-- move -->
<g fill="#fff"><path d="M10 198v3.500M10 206.500v3.500M4 204h3.500M12.500 204h3.500" fill="none" stroke="#e6e6e6" stroke-width="1.200" stroke-dasharray="1.500 1"/><path d="M10 193.500l3 4h-6zM10 214.500l3-4h-6zM-.500 204l4-3v6zM20.500 204l-4-3v6z"/></g>
<!-- rotate -->
<g fill="none" stroke="#e6e6e6" stroke-width="1.200"><path d="M2 236.500a8.700 8.700 0 0 1 16 0M18 242a8.700 8.700 0 0 1 -16 0"/></g><path d="M10 235l3.600 4l-3.600 4l-3.600-4z" fill="#ccc"/><path d="M20.800 235.500l-4.600.8l2.500-4zM-.800 243l4.600-.8l-2.500 4z" fill="#fff"/>
<!-- scale -->
<rect x="1.300" y="273.200" width="8.700" height="8.800" fill="#e0e0e0"/><path d="M1.300 271v-5h16.500v16h-5.500" fill="none" stroke="#e6e6e6" stroke-width="1.200"/><path d="M10.500 272.800l5-5M12 267.500h3.800v3.800" fill="none" stroke="#e6e6e6" stroke-width="1.200"/><path d="M26.500 289h3v-3z" fill="#aaa"/>
<!-- transform -->
<circle cx="10" cy="309" r="9" fill="none" stroke="#e6e6e6" stroke-width="1.100"/><rect x="6" y="305" width="8" height="8" fill="#e0e0e0"/><path d="M10 298.500l2.800 3.500h-5.600zM10 319.500l2.800-3.500h-5.600zM-.500 309l3.500-2.800v5.600zM20.500 309l-3.500-2.800v5.600z" fill="#fff"/>
<!-- annotate -->
<path d="M-2 357c4-1 7-3 10-4.500s5-1 7 .5s5 3.500 8 3.500" fill="none" stroke="#7fd1a5" stroke-width="1.400"/><path d="M1.300 353l10.500-10.700l2.500 2.500l-10.500 10.700l-3.200.8z" fill="#e6e6e6"/><path d="M12.600 341.500l1.200-1.200l2.500 2.500l-1.200 1.200z" fill="#e6e6e6"/><path d="M26.500 365h3v-3z" fill="#aaa"/>
<!-- measure -->
<path d="M2.600 372.700v22.300h19" fill="none" stroke="#e6e6e6" stroke-width="1.400"/><path d="M5 393v-12.500a12.500 12.500 0 0 1 12.500 12.500z" fill="#7fd1a5"/><path d="M2.600 376h3M2.600 380h3M2.600 384h3M2.600 388h3M9 395v-2.500M14 395v-2.500M19 395v-2.500" stroke="#e6e6e6" stroke-width="1"/>
<!-- add cube -->
<g fill="none" stroke="#7fd1a5" stroke-width="1.200" stroke-linejoin="round"><path d="M2.600 421.500h12.400v14h-12.400zM2.600 421.500l6-5.500h12.400l-6 5.500M21 416v13.500l-6 6"/></g><path d="M1.300 410.500v8M-2.700 414.500h8" stroke="#7fd1a5" stroke-width="1.800"/><path d="M26.500 440h3v-3z" fill="#aaa"/>
</svg>
<!-- overlay text -->
<div class="t w" style="left:49px;top:113px;text-shadow:0 0 2px #000,0 1px 1px #000">用户透视</div>
<div class="t w" style="left:49px;top:131px;text-shadow:0 0 2px #000,0 1px 1px #000">(1) 场景集合 | Plane.001</div>
<!-- nav gizmo -->
<svg style="left:760px;top:110px" width="96" height="210" viewBox="760 110 96 210">
<circle cx="786.600" cy="142.400" r="7" fill="#53343a" stroke="#a93a50" stroke-width="1.200"/>
<circle cx="805.400" cy="182.500" r="7" fill="#34496b" stroke="#3a72c2" stroke-width="1.200"/>
<path d="M804.700 153.500V133" stroke="#2e82e6" stroke-width="2.200"/>
<path d="M804.700 153.500L824 146.800" stroke="#6a9d1e" stroke-width="2.200"/>
<path d="M804.700 153.500L818 162.500" stroke="#e8334f" stroke-width="2.200"/>
<circle cx="804.700" cy="125" r="8.400" fill="#2e82e6"/>
<circle cx="831" cy="144.800" r="8" fill="#6a9d1e"/>
<circle cx="823" cy="165.700" r="8.400" fill="#f0375a"/>
<circle cx="778.500" cy="162.600" r="7.400" fill="#50692a" stroke="#8bd11a" stroke-width="1.300"/>
<g font-family="'Liberation Sans',sans-serif" font-size="11" fill="#151515" stroke="#151515" stroke-width=".3" text-anchor="middle"><text x="804.700" y="128.800">Z</text><text x="831" y="148.600">Y</text><text x="823" y="169.500">X</text></g>
<!-- nav buttons -->
<g fill="#2a2a2a" fill-opacity=".85"><circle cx="833.300" cy="208" r="13.500"/><circle cx="833.300" cy="238.300" r="13.500"/><circle cx="833.300" cy="268.700" r="13.500"/><circle cx="833.300" cy="298.700" r="13.500"/></g>
<g fill="none" stroke="#dcdcdc" stroke-width="1.600"><circle cx="834.600" cy="207.300" r="5.600" fill="#dcdcdc"/><path d="M830.500 211.500l-5 5" stroke-width="2.200"/><path d="M831.600 207.300h6M834.600 204.300v6" stroke="#2a2a2a" stroke-width="1.200"/></g>
<g stroke="#dcdcdc" stroke-width="2.300" stroke-linecap="round" fill="none"><path d="M830.200 240L828.400 233.600M832.400 239.500L831.700 231.500M834.700 239.500L835.300 231.600M836.900 240.500L838.600 233.800M830.500 244L826.300 240"/></g><path d="M829 238.500h9v3.800a4.500 4.500 0 0 1 -9 0z" fill="#dcdcdc"/>
<g fill="#dcdcdc"><circle cx="828.600" cy="265.600" r="2.800"/><circle cx="835.400" cy="264.400" r="3.400"/><rect x="827.800" y="269.800" width="9" height="7.400" rx="1"/><path d="M837.300 273.500l4-2.500v6.500l-4-2.500zM827.800 271.500l-2.300 1v2.500l2.300 1z"/></g><circle cx="828.600" cy="265.600" r="1" fill="#2a2a2a"/><circle cx="835.400" cy="264.400" r="1.200" fill="#2a2a2a"/>
<g fill="none" stroke="#dcdcdc" stroke-width="1.300"><path d="M828.400 292.500h9.600l3.200 13h-16zM827.300 297h11.800M826.300 301.200h13.900M831.600 292.500l-1.100 13M834.800 292.500l1.100 13"/></g>
<!-- sidebar toggle -->
<path d="M855 119.500h-4.500a3 3 0 0 0 -3 3v6.500a3 3 0 0 0 3 3h4.500z" fill="#2c2c2c"/><path d="M853.300 122l-3 3.700l3 3.700" fill="none" stroke="#ccc" stroke-width="1.200"/>
</svg>
<!-- annotation: red rects -->
<div class="abs" style="left:25px;top:48px;width:122px;height:32px;border:4px solid #fa5252;z-index:10;border-radius:3px"></div>
<div class="abs" style="left:283px;top:242px;width:433px;height:361px;border:4px solid #fa5252;z-index:10;border-radius:1px"></div>
<!-- ===== outliner ===== -->
<div class="abs" style="left:858px;top:52px;width:282px;height:138px;background:#282828;border-radius:5px 0 0 5px;overflow:hidden">
 <div class="abs" style="left:0;top:0;width:282px;height:26px;background:#303030"></div>
 <div class="abs" style="left:0;top:59px;width:282px;height:20px;background:#2b2b2b"></div>
 <div class="abs" style="left:0;top:79px;width:282px;height:20px;background:#2e4377"></div>
 <div class="abs" style="left:0;top:119px;width:282px;height:20px;background:#2b2b2b"></div>
</div>
<!-- header widgets -->
<div class="fld" style="left:866px;top:55px;width:32px;height:20px"></div>
<svg style="left:870px;top:57px" width="28" height="16" viewBox="0 0 28 16"><g fill="#e6e6e6"><rect x="1" y="1" width="5" height="3.500"/><rect x="6.500" y="6" width="7.500" height="3.500"/><rect x="6.500" y="11" width="7.500" height="3.500"/></g><path d="M3 5v8H6M3 8H6" fill="none" stroke="#e6e6e6" stroke-width="1"/><path class="chev" d="M17.500 6.500l3 3l3-3"/></svg>
<div class="fld" style="left:903px;top:55px;width:32px;height:20px"></div>
<svg style="left:906px;top:56px" width="28" height="17" viewBox="0 0 28 17"><g fill="none" stroke="#e6e6e6" stroke-width="1.100"><path d="M1 5v10.500h11"/><path d="M3 3v10.500h11"/></g><rect x="5" y="1" width="11.500" height="10.500" fill="#e6e6e6"/><path d="M6.300 10.300l3-4.600l2 2.700l1.200-1.200l2.600 3.100z" fill="#282828"/><circle cx="13.600" cy="3.900" r="1.100" fill="#282828"/><path class="chev" d="M19 7.500l3 3l3-3"/></svg>
<div class="fld dark" style="left:951px;top:55px;width:111px;height:20px"></div>
<svg style="left:955px;top:57px" width="16" height="16" viewBox="0 0 16 16"><circle cx="9.500" cy="6" r="4.200" fill="none" stroke="#e6e6e6" stroke-width="1.300"/><path d="M6.500 9l-5 5.500" stroke="#e6e6e6" stroke-width="1.500"/></svg>
<div class="fld" style="left:1078px;top:55px;width:32px;height:20px"></div>
<svg style="left:1081px;top:57px" width="28" height="16" viewBox="0 0 28 16"><path d="M1.500 1.500h11.500l-4.500 6v6.500l-2.500-2v-4.500z" fill="none" stroke="#e6e6e6" stroke-width="1.200" stroke-linejoin="round"/><path class="chev" d="M18.500 6.500l3 3l3-3"/></svg>
<div class="btn" style="left:1116px;top:55px;width:26px;height:20px;border-radius:4px 0 0 4px"></div>
<svg style="left:1116.500px;top:57px" width="18" height="16" viewBox="0 0 18 16"><path d="M1.500 5.500h9.500M2.500 5.500v8.500h10v-5M1.500 2.500h7v3M5.500 9.500h4" fill="none" stroke="#e6e6e6" stroke-width="1.200"/><circle cx="13.500" cy="4" r="3.600" fill="#e6e6e6"/><path d="M11.500 4h4M13.500 2v4" stroke="#545454" stroke-width="1.100"/></svg>
<!-- rows -->
<svg style="left:858px;top:78px;overflow:hidden" width="278" height="112" viewBox="858 78 278 112">
<defs>
<g id="coll"><rect x="0" y="0" width="14" height="3.500" fill="currentColor"/><path d="M1 5h12v8.500h-12zM4.500 7.500h5v2h-5z" fill="currentColor" fill-rule="evenodd"/></g>
<g id="eye"><path d="M0 4.500c3.500-6 10.500-6 14 0c-3.500 6-10.500 6-14 0z" fill="currentColor"/><circle cx="7" cy="4.500" r="3.100" fill="var(--bg,#282828)"/><circle cx="7" cy="4.500" r="1.600" fill="currentColor"/></g>
<g id="cam"><path d="M0 2.500h3.500l1-2h5l1 2H14v9.500H0z" fill="currentColor"/><circle cx="7" cy="7" r="3.600" fill="var(--bg,#282828)"/><circle cx="7" cy="7" r="2.300" fill="currentColor"/><circle cx="7" cy="7" r="1.100" fill="var(--bg,#282828)"/></g>
<g id="tri"><path d="M1.500 1.500L13.500 1.500L7.500 14z" fill="none" stroke="#e0873c" stroke-width="2.400" stroke-linejoin="round"/></g>
<g id="mesh"><path d="M2.500 2.500h10l-5 10z" fill="none" stroke="#1fc39a" stroke-width="1.100"/><g fill="#282828" stroke="#1fc39a" stroke-width="1.100"><rect x="1" y="1" width="3" height="3"/><rect x="11" y="1" width="3" height="3"/><rect x="6" y="10.500" width="3" height="3"/></g></g>
</defs>
<!-- scene collection (partly hidden) -->
<g color="#e6e6e6"><rect x="879.500" y="75" width="17" height="14.500" rx="3" fill="#3a3a3a" stroke="#555" stroke-width=".8"/><rect x="882" y="79" width="12" height="8.500" fill="#e6e6e6"/><rect x="885" y="81.500" width="6" height="1.800" fill="#3a3a3a"/></g>
<g color="#8c8c8c"><use href="#coll" x="901" y="95"/></g>
<g color="#e6e6e6"><use href="#coll" x="901" y="115"/></g>
<path d="M884 118.500h7l-3.500 6.500z" fill="#e6e6e6"/>
<path d="M887.500 136V186" stroke="#555" stroke-width="1"/>
<path d="M905.500 138l6 3.500l-6 3.500zM905.500 158l6 3.500l-6 3.500zM905.500 178l6 3.500l-6 3.500z" fill="#d0d0d0"/>
<rect x="918.500" y="132.500" width="18" height="17.500" rx="3" fill="#4b5b80" stroke="#65779f" stroke-width=".8"/>
<use href="#tri" x="920" y="134"/><use href="#tri" x="920" y="154"/><use href="#tri" x="920" y="174"/>
<use href="#mesh" x="1016" y="134" style="--bg:#2e4377"/><use href="#mesh" x="1016" y="154"/><use href="#mesh" x="1016" y="174"/>
<!-- right columns -->
<rect x="1072.500" y="96.500" width="9" height="9" fill="none" stroke="#d0d0d0" stroke-width="1.100"/>
<rect x="1072" y="116" width="10" height="10" fill="#e6e6e6"/><path d="M1074 121l2.300 2.500l4-5" fill="none" stroke="#282828" stroke-width="1.500"/>
<g color="#b0b0b0"><use href="#eye" x="1089" y="97"/><use href="#cam" x="1110" y="95.500"/></g>
<g color="#e6e6e6" style="--bg:#2b2b2b"><use href="#eye" x="1089" y="117"/><use href="#cam" x="1110" y="115.500"/></g>
<g color="#e6e6e6" style="--bg:#2e4377"><use href="#eye" x="1089" y="137"/><use href="#cam" x="1110" y="135.500"/></g>
<g color="#e6e6e6"><use href="#eye" x="1089" y="157"/><use href="#cam" x="1110" y="155.500"/></g>
<g color="#e6e6e6" style="--bg:#2b2b2b"><use href="#eye" x="1089" y="177"/><use href="#cam" x="1110" y="175.500"/></g>
<rect x="1131" y="95" width="2" height="73" rx="1" fill="#555"/>
</svg>
<div class="abs" style="left:900px;top:78px;width:60px;height:14px;overflow:hidden"><div class="t" style="left:2px;top:-3px">场景集合</div></div>
<div class="t" style="left:922px;top:95px;color:#8c8c8c">Collection</div>
<div class="t" style="left:922px;top:115px">Collection 2</div>
<div class="t" style="left:942px;top:135px;color:#ffaf29">Plane.001</div>
<div class="t" style="left:942px;top:155px">Plane.002</div>
<div class="t" style="left:942px;top:175px">Plane.003</div>
<!-- ===== properties editor ===== -->
<div class="abs" style="left:858px;top:194px;width:282px;height:500px;background:#303030;border-radius:5px 0 0 0"></div>
<div class="abs" style="left:858px;top:218px;width:28px;height:472px;background:#1e1e1e"></div>
<div class="abs" style="left:858px;top:257px;width:28px;height:1px;background:#303030"></div>
<div class="abs" style="left:860px;top:580px;width:26px;height:26px;background:#303030;border-radius:3px 0 0 3px"></div>
<!-- header -->
<div class="fld" style="left:867px;top:197px;width:30px;height:19px"></div>
<svg style="left:870px;top:199px" width="28" height="16" viewBox="0 0 28 16"><g fill="none" stroke="#e6e6e6" stroke-width="1.300"><rect x="1.500" y="1.500" width="11.500" height="5" rx="2.500"/><rect x="1.500" y="9" width="11.500" height="5" rx="2.500"/></g><rect x="1.500" y="1.500" width="6.500" height="5" rx="2.500" fill="#e6e6e6"/><rect x="1.500" y="9" width="7.500" height="5" rx="2.500" fill="#e6e6e6"/><path class="chev" d="M17 7l3 3l3-3"/></svg>
<div class="fld dark" style="left:940px;top:197px;width:110px;height:19px"></div>
<svg style="left:943px;top:199px" width="16" height="16" viewBox="0 0 16 16"><circle cx="9.500" cy="6" r="4.200" fill="none" stroke="#e6e6e6" stroke-width="1.300"/><path d="M6.500 9l-5 5.500" stroke="#e6e6e6" stroke-width="1.500"/></svg>
<div class="fld" style="left:1110px;top:197px;width:19px;height:19px"></div>
<svg style="left:1115px;top:204px" width="8" height="6" viewBox="0 0 8 6"><path class="chev" d="M1 1l3 3l3-3"/></svg>
<!-- tabs -->
<svg style="left:858px;top:220px" width="30" height="467" viewBox="858 220 30 467">
<!-- tool -->
<g fill="#b4b4b4"><path d="M868 232v8.500h-1.200v3.500a1.700 1.700 0 0 0 3.400 0v-3.500h-1.200v-8.500z"/><path d="M866.300 234.500h3.400v1h-3.400z"/><path d="M874.500 232.500v3.500l1.300 1.300v9.200h1.600v-9.200l1.300-1.300v-3.500l-1.200 1.800h-1.800z"/></g>
<!-- render -->
<g fill="#c8c8c8"><path d="M866 270.500h13.500v10.500h-13.500z"/><path d="M868.500 268h4.500v2.500h-4.500z"/><path d="M879.500 273.500l2-1v6.500l-2-1z"/></g><path d="M867.500 273.500h7.500M867.500 276h7.500M867.500 278.500h7.500" stroke="#1e1e1e" stroke-width="1"/><rect x="876.500" y="272.500" width="1.800" height="1.800" fill="#1e1e1e"/>
<!-- output -->
<g fill="#c8c8c8"><rect x="866" y="299" width="14.500" height="5"/><path d="M868.500 304.500h9.500v8h-9.500z" fill="none" stroke="#c8c8c8" stroke-width="1.200"/><path d="M869.500 311.500l2.500-3.500l1.500 2l1-1l2 2.500z"/></g>
<!-- view layer -->
<g fill="none" stroke="#c8c8c8" stroke-width="1.100"><path d="M866.500 329.500v9.500h10M868.500 327.500v9.500h10"/></g><rect x="870" y="325.500" width="10.500" height="9.500" fill="#c8c8c8"/><path d="M871 334l2.700-4l1.800 2.300l1.100-1l2.400 2.700z" fill="#1d1d1d"/><circle cx="877.800" cy="328.200" r="1" fill="#1d1d1d"/>
<!-- scene -->
<g fill="#c8c8c8"><path d="M869.500 353c-1.300 3-3 5-3 7.300a3 3 0 0 0 6 0c0-2.300-1.700-4.300-3-7.300z"/><circle cx="875.500" cy="354.800" r="1.800"/><circle cx="877" cy="362" r="3" fill="#1d1d1d" stroke="#c8c8c8" stroke-width="1.200"/></g>
<!-- world -->
<g fill="none" stroke="#d9596b" stroke-width="1.400"><circle cx="873.300" cy="388.800" r="6.300"/><path d="M869 384.500c2 1 3 2.500 2 4.500s1 3 2.500 4.500M875 383c-.5 2 1 3 3.500 3M879.300 390c-2-.5-3.500.5-3 2.500"/><path d="M866 394.500l2.500-2" stroke-linecap="round"/></g>
<!-- object -->
<rect x="869" y="420.500" width="8.500" height="8.500" fill="#e08a3c"/><path d="M866.500 421v-3.500h3.500M876.500 417.500h3.500v3.500M880 428.500v3.500h-3.500M870 432h-3.500v-3.500" fill="none" stroke="#e08a3c" stroke-width="1.100"/>
<!-- modifiers -->
<path d="M879.800 449.500a4.200 4.200 0 0 1 -5.500 4l-5 5.500a1.700 1.700 0 0 1 -2.500-2.500l5.500-5a4.200 4.200 0 0 1 5-5.500l-2.800 2.800l.8 2.300l2.300.8z" fill="#6a94e0"/>
<!-- particles -->
<g fill="none" stroke="#6a94e0" stroke-width="1.300"><path d="M868.500 476.500l9.500-.5M868.500 476.500l9 9M868.500 476.500v9.500"/></g><g fill="#6a94e0"><circle cx="868.500" cy="476.300" r="2.600"/><circle cx="878.500" cy="475.800" r="1.700"/><circle cx="878.300" cy="486" r="1.700"/><circle cx="868.500" cy="486.500" r="1.700"/></g>
<!-- physics -->
<g fill="none" stroke="#6a94e0" stroke-width="1.400"><path d="M878.500 503.500a7 7 0 1 0 1.500 7.500"/></g><circle cx="873" cy="508.500" r="2.900" fill="#6a94e0"/><circle cx="879.800" cy="505.300" r="1.500" fill="#6a94e0"/>
<!-- constraints -->
<g fill="none" stroke="#6a94e0" stroke-width="1.500"><path d="M866.200 540.500c-1-5 5.500-11 12.200-10.300c2 .4 2.200 2.500.8 3.700l-7.500 9c-2 2.200-5 1-5.500-2.400z"/><circle cx="870.500" cy="539" r="2.300"/></g>
<!-- data -->
<g fill="#1d1d1d" stroke="#1fc39a" stroke-width="1.100"><path d="M867.500 558.500h11.500l-5.700 11z" fill="none"/><rect x="866" y="557" width="3" height="3"/><rect x="877.500" y="557" width="3" height="3"/><rect x="871.800" y="568" width="3" height="3"/></g>
<!-- material -->
<circle cx="873.200" cy="593" r="6.700" fill="none" stroke="#dc6a7a" stroke-width="1.300"/><path d="M873.200 586.300a6.700 6.700 0 0 0 -6.700 6.700h6.700zM873.200 593h6.700a6.700 6.700 0 0 1 -6.700 6.700z" fill="#dc6a7a"/>
<!-- texture -->
<rect x="866" y="622" width="14.400" height="14.400" fill="#b8626d"/><path d="M870.1 623.0h3.1v3.1h-3.1zM876.3 623.0h3.1v3.1h-3.1zM867.0 626.1h3.1v3.1h-3.1zM873.2 626.1h3.1v3.1h-3.1zM870.1 629.2h3.1v3.1h-3.1zM876.3 629.2h3.1v3.1h-3.1zM867.0 632.3h3.1v3.1h-3.1zM873.2 632.3h3.1v3.1h-3.1z" fill="#161616"/>
<path d="M861 643.500h25" stroke="#2a2a2a" stroke-width="1"/>
</svg>
<div class="abs" style="left:848px;top:571px;width:45px;height:40px;border:4px solid #fa5252;z-index:10;border-radius:3px"></div>
<!-- ===== properties content ===== -->
<!-- breadcrumb -->
<svg style="left:896px;top:229px" width="16" height="16" viewBox="0 0 16 16"><rect x="4" y="4" width="8" height="8" fill="#e6e6e6"/><path d="M1 4.500V1.500H4M12 1.500h3V4.500M15 11.500v3H12M4 14.500H1V11.500" fill="none" stroke="#e6e6e6" stroke-width="1.100"/></svg>
<div class="t" style="left:920px;top:230px">Plane.001</div>
<svg style="left:987px;top:233px" width="6" height="9" viewBox="0 0 6 9"><path class="chev" d="M1 1l3.500 3.500L1 8"/></svg>
<svg style="left:1002px;top:229px" width="16" height="16" viewBox="0 0 16 16"><circle cx="8" cy="8" r="6.500" fill="none" stroke="#e6e6e6" stroke-width="1.300"/><path d="M8 1.500A6.500 6.500 0 0 0 1.500 8H8zM8 8h6.500A6.500 6.500 0 0 1 8 14.500z" fill="#e6e6e6"/></svg>
<div class="t" style="left:1026px;top:230px">2_MAT</div>
<svg style="left:1111px;top:229px" width="16" height="16" viewBox="0 0 16 16"><path d="M9.500 1.500l5 5l-2 .6l-2.600 2.600l.2 3l-1.600.3l-5.500-5.500l.3-1.600l3 .2l2.600-2.600zM5.200 10.800L1.500 14.500" fill="none" stroke="#c8c8c8" stroke-width="1.100" stroke-linejoin="round"/></svg>
<!-- material slots list -->
<div class="abs" style="left:894px;top:262px;width:205px;height:81px;background:#222;border:1px solid #3d3d3d;border-radius:4px"></div>
<div class="abs" style="left:900px;top:269px;width:194px;height:18px;background:#4a4a50;border-radius:3px"></div>
<svg style="left:903px;top:270px" width="16" height="16" viewBox="0 0 16 16"><defs><radialGradient id="mb" cx=".4" cy=".3" r=".7"><stop offset="0" stop-color="#c9b48a"/><stop offset=".6" stop-color="#7a6a3c"/><stop offset="1" stop-color="#3c3a24"/></radialGradient></defs><circle cx="8" cy="8" r="6.700" fill="url(#mb)"/><ellipse cx="8" cy="10.500" rx="5.500" ry="1.600" fill="#e6e0d0" opacity=".75"/></svg>
<div class="t" style="left:925px;top:271px">2_MAT</div>
<svg style="left:905px;top:328px" width="8" height="8" viewBox="0 0 8 8"><path d="M1 1l5.500 3l-5.500 3z" fill="#a0a0a0"/></svg>
<!-- + / - / menu -->
<div class="btn" style="left:1109px;top:264px;width:19px;height:18px;border-radius:4px 4px 0 0;background:#4c4c4c"></div>
<div class="btn" style="left:1109px;top:283px;width:19px;height:18px;border-radius:0 0 4px 4px;background:#646464"></div>
<div class="btn" style="left:1109px;top:310px;width:19px;height:18px;border-radius:4px;background:#2c2c2c"></div>
<svg style="left:1109px;top:264px" width="19" height="38" viewBox="0 0 19 38"><path d="M5 9h9M9.500 4.500v9M5 28h9" stroke="#fff" stroke-width="1.300" fill="none"/></svg>
<div class="abs" style="left:1106px;top:282px;width:28px;height:25px;border:4px solid #fa5252;z-index:10;border-radius:3px"></div>
<div class="abs" style="left:889px;top:254px;width:213px;height:41px;border:4px solid #fa5252;z-index:10;border-radius:3px"></div>
<!-- material selector row -->
<div class="fld" style="left:894px;top:349px;width:194px;height:19px"></div>
<div class="abs dark" style="left:925px;top:350px;width:78px;height:17px"></div>
<div class="abs" style="left:1003px;top:350px;width:84px;height:17px;background:#545454;border-radius:0 3px 3px 0"></div>
<div class="abs blue" style="left:1028px;top:350px;width:19px;height:17px"></div>
<svg style="left:897px;top:350px" width="30" height="16" viewBox="0 0 30 16"><circle cx="8" cy="8" r="6.500" fill="none" stroke="#e6e6e6" stroke-width="1.300"/><path d="M8 1.500A6.500 6.500 0 0 0 1.500 8H8zM8 8h6.500A6.500 6.500 0 0 1 8 14.500z" fill="#e6e6e6"/><path class="chev" d="M19 6.500l3 3l3-3"/></svg>
<div class="t" style="left:933px;top:351px">2_MAT</div>
<div class="t" style="left:1012px;top:351px">3</div>
<svg style="left:1030px;top:351px" width="56" height="16" viewBox="0 0 56 16"><path d="M2 3c2 0 4-1 5.500-2c1.500 1 3.500 2 5.500 2c0 5-1.500 9-5.500 11.500c-4-2.500-5.500-6.500-5.500-11.500z" fill="#fff"/><g fill="none" stroke="#e6e6e6" stroke-width="1.200"><path d="M24 4V1.300h5l3.300 3.200v6H29"/><rect x="20.500" y="4" width="8.300" height="9.500"/><path d="M41 3l8 8M49 3l-8 8"/></g></svg>
<div class="fld" style="left:1096px;top:349px;width:32px;height:19px"></div>
<svg style="left:1099px;top:351px" width="28" height="16" viewBox="0 0 28 16"><g fill="none" stroke="#e6e6e6" stroke-width="1.100"><rect x="3" y="8" width="4" height="4"/><path d="M5 8V3h3"/><path d="M17.500 6.500l2 2l3.500-4"/></g></svg>
<!-- tooltip -->
<div class="abs" style="left:1002px;top:315px;width:118px;height:44px;background:#191919;border-radius:4px;box-shadow:0 1px 4px rgba(0,0,0,.5)"></div>
<div class="t" style="left:1015px;top:323px;color:#e6e6e6">移除材质槽</div>
<div class="t" style="left:1015px;top:336px;color:#e6e6e6">移除选中的材质槽.</div>
<!-- panels -->
<div class="abs" style="left:894px;top:378px;width:234px;height:25px;background:#3d3d3d;border-radius:4px"></div>
<div class="abs" style="left:894px;top:405px;width:234px;height:290px;background:#3d3d3d;border-radius:4px 4px 0 0"></div>
<svg style="left:903px;top:385px" width="10" height="11" viewBox="0 0 10 11"><path class="chev" d="M2 1l4.500 4.500L2 10"/></svg>
<div class="t" style="left:916px;top:384px">预览</div>
<svg style="left:901px;top:413px" width="11" height="10" viewBox="0 0 11 10"><path class="chev" d="M1 2l4.500 4.500L10 2"/></svg>
<div class="t" style="left:916px;top:411px">表(曲)面</div>
<svg style="left:1110px;top:387px" width="12" height="34" viewBox="0 0 12 34"><g fill="#888"><rect x="0" y="1" width="1.500" height="1.500"/><rect x="3" y="1" width="1.500" height="1.500"/><rect x="6" y="1" width="1.500" height="1.500"/><rect x="9" y="1" width="1.500" height="1.500"/><rect x="0" y="4" width="1.500" height="1.500"/><rect x="3" y="4" width="1.500" height="1.500"/><rect x="6" y="4" width="1.500" height="1.500"/><rect x="9" y="4" width="1.500" height="1.500"/><rect x="0" y="28" width="1.500" height="1.500"/><rect x="3" y="28" width="1.500" height="1.500"/><rect x="6" y="28" width="1.500" height="1.500"/><rect x="9" y="28" width="1.500" height="1.500"/><rect x="0" y="31" width="1.500" height="1.500"/><rect x="3" y="31" width="1.500" height="1.500"/><rect x="6" y="31" width="1.500" height="1.500"/><rect x="9" y="31" width="1.500" height="1.500"/></g></svg>
<!-- rows -->
<div class="t" style="left:877px;width:100px;text-align:right;top:441px">表(曲)面</div>
<div class="abs dark" style="left:987px;top:439px;width:112px;height:18px;border-radius:3px;background:#282828"></div>
<div class="t" style="left:1008px;top:441px">MIXER</div>
<div class="t" style="left:877px;width:100px;text-align:right;top:477px">系数</div>
<div class="abs" style="left:987px;top:475px;width:112px;height:18px;border-radius:3px;background:#282828"></div>
<div class="abs blue" style="left:1005px;top:475px;width:94px;height:18px;border-radius:0 3px 3px 0"></div>
<div class="t w" style="left:1005px;width:94px;text-align:center;top:477px">1.000</div>
<div class="t" style="left:877px;width:100px;text-align:right;top:502px">着色器</div>
<div class="abs" style="left:987px;top:500px;width:112px;height:18px;border-radius:3px;background:#282828"></div>
<div class="t" style="left:1008px;top:502px">透明 BSDF</div>
<div class="t" style="left:877px;width:100px;text-align:right;top:527px">着色器</div>
<div class="abs" style="left:987px;top:525px;width:112px;height:18px;border-radius:3px;background:#282828"></div>
<div class="t" style="left:1008px;top:527px">自发光(发射)</div>
<div class="t" style="left:877px;width:100px;text-align:right;top:552px">颜色</div>
<div class="abs" style="left:987px;top:550px;width:112px;height:18px;border-radius:3px;background:#282828"></div>
<div class="t" style="left:1008px;top:552px">Panorama</div>
<svg style="left:894px;top:430px" width="234" height="140" viewBox="894 430 234 140"><g stroke="#1a1a1a" stroke-width=".8"><circle cx="996" cy="448" r="3.900" fill="#63c763"/><circle cx="996" cy="484" r="3.900" fill="#a1a1a1"/><circle cx="996" cy="509" r="3.900" fill="#63c763"/><circle cx="996" cy="534" r="3.900" fill="#63c763"/><circle cx="996" cy="559" r="3.900" fill="#c7c729"/></g><circle cx="1110" cy="484" r="2" fill="#e6e6e6"/><path d="M909 505.500l6 3.500l-6 3.500zM908 531h7l-3.500 6.500zM908 556h7l-3.500 6.500z" fill="#e6e6e6"/></svg>
<!-- image row -->
<div class="fld" style="left:903px;top:575px;width:216px;height:18px"></div>
<div class="abs dark" style="left:933px;top:575px;width:106px;height:18px"></div>
<div class="abs" style="left:1039px;top:575px;width:80px;height:18px;background:#545454;border-radius:0 4px 4px 0"></div>
<svg style="left:903px;top:575px" width="216" height="18" viewBox="0 0 216 18"><g stroke="#3a3a3a"><path d="M156.500 1v16M176.500 1v16M196.500 1v16"/></g><rect x="4.500" y="3" width="13" height="12" fill="none" stroke="#e6e6e6" stroke-width="1.100"/><path d="M5.500 14l4-6.500l3 4.500l1.500-1.500l2.500 3.500z" fill="#e6e6e6"/><circle cx="14" cy="6.500" r="1.300" fill="#e6e6e6"/><path class="chev" d="M21 7.500l3 3l3-3"/><path d="M141 4.500c2 0 4-1 5.500-2c1.500 1 3.500 2 5.500 2c0 4.500-1.500 8-5.500 10.500c-4-2.500-5.500-6-5.500-10.500z" fill="none" stroke="#aaa" stroke-width="1.100"/><g fill="none" stroke="#e6e6e6" stroke-width="1.200"><path d="M163.500 5V2.500h5l3.300 3.200v6h-3"/><rect x="160" y="5.200" width="8.300" height="9.500"/><path d="M202 4.500l9 9M211 4.500l-9 9"/></g><path d="M180 4h5l1.500 2h7v9h-13.500z" fill="#e6e6e6"/><path d="M180 7.300h13.500" stroke="#545454" stroke-width=".8"/></svg>
<div class="t" style="left:941px;top:577px">2-cufang.jpg</div>
<!-- dropdown rows -->
<div class="abs" style="left:987px;top:600px;width:112px;height:18px;border-radius:3px;background:#282828"></div>
<div class="t" style="left:994px;top:602px">线性</div>
<div class="abs" style="left:987px;top:625px;width:112px;height:18px;border-radius:3px;background:#282828"></div>
<div class="t" style="left:994px;top:627px">等距圆柱(ERP)</div>
<div class="abs" style="left:987px;top:650px;width:112px;height:18px;border-radius:3px;background:#282828"></div>
<div class="t" style="left:994px;top:652px">单张图像</div>
<div class="abs" style="left:1033px;top:675px;width:66px;height:18px;border-radius:3px;background:#282828"></div>
<div class="t" style="left:1040px;top:677px">sRGB</div>
<div class="t" style="left:903px;top:677px">色彩空间</div>
<svg style="left:1085px;top:600px" width="30" height="87" viewBox="0 0 30 87"><path class="chev" d="M5 7.500l3 3l3-3M5 32.500l3 3l3-3M5 57.500l3 3l3-3M5 82.500l3 3l3-3"/><circle cx="25" cy="9" r="2" fill="#e6e6e6"/><circle cx="25" cy="34" r="2" fill="#e6e6e6"/></svg>
<!-- scrollbars -->
<div class="abs" style="left:1128px;top:230px;width:6px;height:445px;background:#4f4f4f;border-radius:3px"></div>
</body>
</html>
